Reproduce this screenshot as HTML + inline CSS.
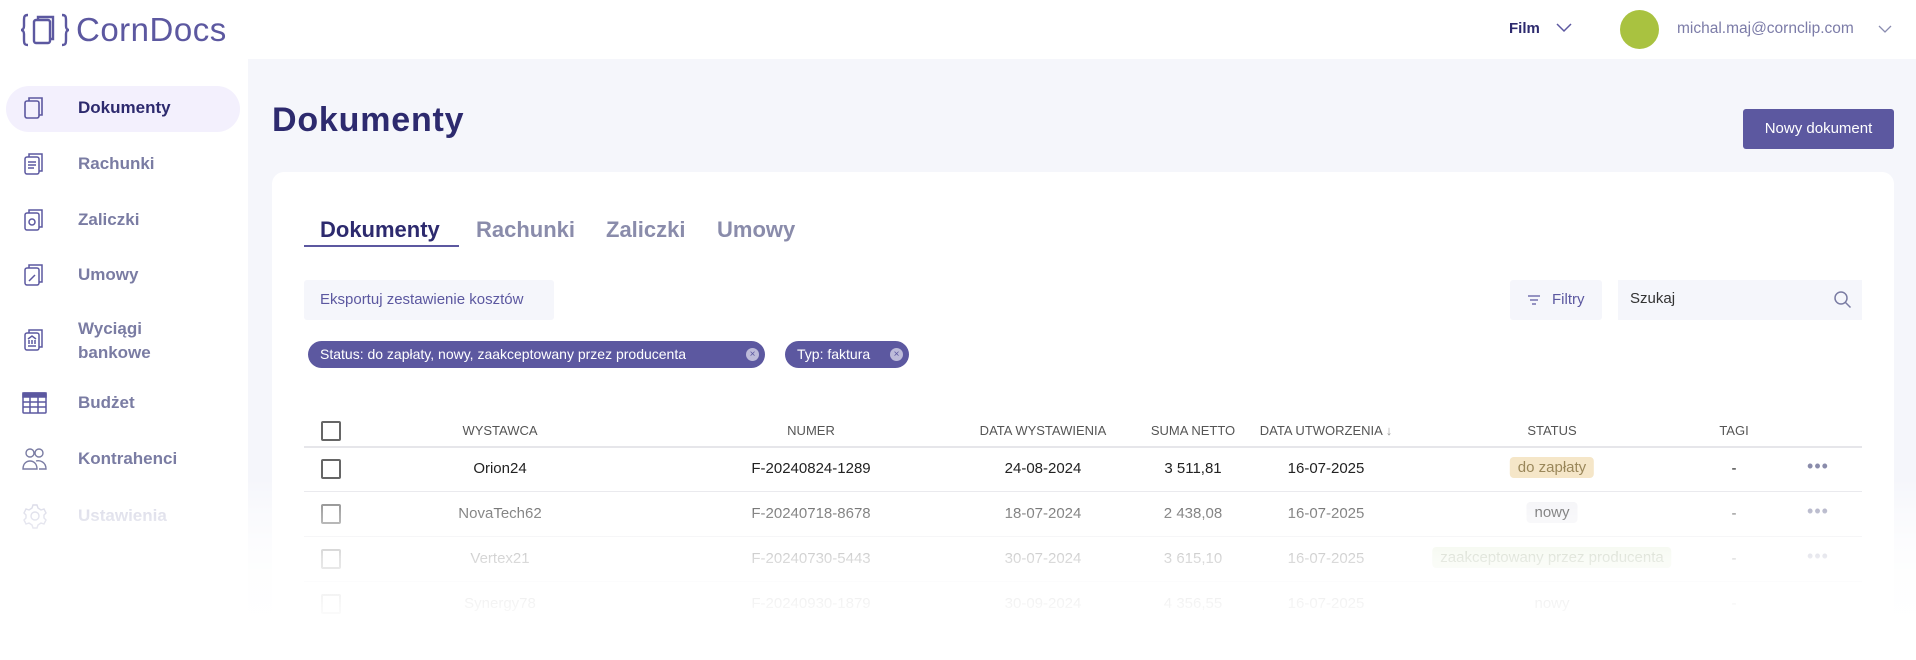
<!DOCTYPE html>
<html><head><meta charset="utf-8"><style>
*{box-sizing:border-box;margin:0;padding:0}
body{width:1916px;height:660px;overflow:hidden;background:#fff;font-family:"Liberation Sans",sans-serif;position:relative;color:#222}
.abs{position:absolute}
.main{left:248px;top:59px;width:1668px;height:601px;background:#f5f6fb}
.nav{left:6px;width:234px;height:46px;border-radius:23px}
.nl{position:absolute;left:78px;font-size:17px;font-weight:bold;color:#7a7ca3}
.ic{position:absolute;left:22px}
.card{left:272px;top:172px;width:1622px;height:488px;background:#fff;border-radius:12px}
.tab{top:217px;font-size:22px;font-weight:bold;color:#8a8cab}
.th{top:423px;font-size:13px;color:#555;text-align:center;transform:translateX(-50%);white-space:nowrap}
.td{font-size:15px;text-align:center;transform:translateX(-50%);white-space:nowrap}
.cb{left:321px;width:20px;height:20px;border:2px solid #666;border-radius:2px}
.line{left:304px;width:1558px;height:1px;background:#e6e6ea}
.chip{top:341px;height:27px;border-radius:14px;background:#5c58a0;color:#fff;font-size:14px;line-height:27px;padding-left:12px}
.x{position:absolute;right:6px;top:7px;width:13px;height:13px;border-radius:50%;background:#bdbbd9;color:#5c58a0;font-size:10px;line-height:13px;text-align:center}
</style></head><body>
<!-- header -->
<div class="abs" style="left:20px;top:10px;height:40px;display:flex;align-items:center;color:#5c58a0">
<svg width="50" height="36" viewBox="0 0 50 36" fill="none" stroke="#5c58a0" stroke-width="2.4"><path d="M8 3c-4 0-4 2-4 6v5c0 2-1 4-3 4c2 0 3 2 3 4v5c0 4 0 6 4 6"/><path d="M42 3c4 0 4 2 4 6v5c0 2 1 4 3 4c-2 0-3 2-3 4v5c0 4 0 6-4 6"/><rect x="14" y="8" width="16" height="23" rx="2"/><path d="M18 8V5h15v22h-3"/></svg>
<span style="font-size:33px;margin-left:6px;letter-spacing:0.5px">CornDocs</span></div>
<div class="abs" style="left:1509px;top:20px;font-size:15px;font-weight:bold;color:#2d2a6e">Film</div>
<svg class="abs" style="left:1556px;top:23px" width="16" height="10"><path d="M1 1l7 7 7-7" fill="none" stroke="#5c58a0" stroke-width="1.5"/></svg>
<div class="abs" style="left:1620px;top:10px;width:39px;height:39px;border-radius:50%;background:#a9c240"></div>
<div class="abs" style="left:1677px;top:20px;font-size:15.5px;color:#7c7ca8">michal.maj@cornclip.com</div>
<svg class="abs" style="left:1878px;top:25px" width="14" height="9"><path d="M1 1l6 6 6-6" fill="none" stroke="#8a8cb0" stroke-width="1.3"/></svg>

<!-- sidebar -->
<div class="abs nav" style="top:86px;background:#f3f0fd"></div>
<div class="abs" style="left:0;top:0;width:248px;height:600px">
<svg class="ic" style="top:96px" width="24" height="24" fill="none" stroke="#5c58a0" stroke-width="1.6"><rect x="3" y="5" width="14" height="17" rx="2"/><path d="M7 5V2h13v17h-3"/></svg>
<div class="nl" style="top:98px;color:#2d2a6e">Dokumenty</div>
<svg class="ic" style="top:152px" width="24" height="24" fill="none" stroke="#5c58a0" stroke-width="1.5"><rect x="3" y="5" width="14" height="17" rx="2"/><path d="M7 5V2h13v17h-3M6 10h8M6 13h8M6 16h6"/></svg>
<div class="nl" style="top:154px">Rachunki</div>
<svg class="ic" style="top:208px" width="24" height="24" fill="none" stroke="#5c58a0" stroke-width="1.5"><rect x="3" y="5" width="14" height="17" rx="2"/><path d="M7 5V2h13v17h-3"/><circle cx="10" cy="14" r="3"/></svg>
<div class="nl" style="top:210px">Zaliczki</div>
<svg class="ic" style="top:263px" width="24" height="24" fill="none" stroke="#5c58a0" stroke-width="1.5"><rect x="3" y="5" width="14" height="17" rx="2"/><path d="M7 5V2h13v17h-3M7 18l6-6"/></svg>
<div class="nl" style="top:265px">Umowy</div>
<svg class="ic" style="top:328px" width="24" height="24" fill="none" stroke="#5c58a0" stroke-width="1.5"><rect x="3" y="5" width="14" height="17" rx="2"/><path d="M7 5V2h13v17h-3M6 18h8M7 16v-4M10 16v-4M13 16v-4M6 11l4-3 4 3"/></svg>
<div class="nl" style="top:317px;line-height:24px">Wyciągi<br>bankowe</div>
<svg class="ic" style="top:391px" width="26" height="24" fill="none" stroke="#5c58a0" stroke-width="1.5"><rect x="1" y="2" width="23" height="20" rx="1"/><rect x="1" y="2" width="23" height="4" fill="#5c58a0"/><path d="M1 11h23M1 16h23M8 6v16M16 6v16"/></svg>
<div class="nl" style="top:393px">Budżet</div>
<svg class="ic" style="top:447px" width="26" height="24" fill="none" stroke="#7a7ca3" stroke-width="1.4"><circle cx="8" cy="6" r="4"/><circle cx="17" cy="6" r="4"/><path d="M1 22c0-6 4-8 7-8s7 2 7 8zM14 14c4-1 10 1 10 8h-7"/></svg>
<div class="nl" style="top:449px">Kontrahenci</div>
<svg class="ic" style="top:503px" width="26" height="26" fill="none" stroke="#c9cadd" stroke-width="1.4"><circle cx="13" cy="13" r="4"/><path d="M11 2h4l1 3 3 2 3-1 2 4-2 2v3l2 2-2 4-3-1-3 2-1 3h-4l-1-3-3-2-3 1-2-4 2-2v-3L2 10l2-4 3 1 3-2z"/></svg>
<div class="nl" style="top:506px;color:#c9cadd">Ustawienia</div>
</div>

<!-- main -->
<div class="abs main"></div>
<div class="abs" style="left:272px;top:101px;font-size:34px;font-weight:bold;color:#2d2a6e;letter-spacing:0.8px">Dokumenty</div>
<div class="abs" style="left:1743px;top:109px;width:151px;height:40px;border-radius:3px;background:#5c58a0;color:#fff;font-size:15px;line-height:40px;text-align:center">Nowy dokument</div>
<div class="abs card"></div>
<div class="abs tab" style="left:320px;color:#2d2a6e">Dokumenty</div>
<div class="abs" style="left:304px;top:245px;width:155px;height:2px;background:#5c58a0"></div>
<div class="abs tab" style="left:476px">Rachunki</div>
<div class="abs tab" style="left:606px">Zaliczki</div>
<div class="abs tab" style="left:717px">Umowy</div>

<div class="abs" style="left:304px;top:280px;width:250px;height:40px;background:#f5f6fb;border-radius:3px;color:#5c58a0;font-size:15px;line-height:40px;padding-left:16px">Eksportuj zestawienie kosztów</div>
<div class="abs" style="left:1510px;top:280px;width:92px;height:40px;background:#f5f6fb;border-radius:3px;color:#5c58a0;font-size:15px;line-height:40px;padding-left:42px">Filtry</div>
<svg class="abs" style="left:1527px;top:294px" width="14" height="12" stroke="#5c58a0" stroke-width="1.3"><path d="M1 2h12M3 6h8M5 10h4"/></svg>
<div class="abs" style="left:1618px;top:280px;width:244px;height:40px;background:#f5f6fb;color:#333;font-size:15px;line-height:38px;padding-left:12px">Szukaj</div>
<svg class="abs" style="left:1833px;top:290px" width="20" height="20" fill="none" stroke="#7a7ca3" stroke-width="1.5"><circle cx="8" cy="8" r="6"/><path d="M12.5 12.5l5 5"/></svg>

<div class="abs chip" style="left:308px;width:457px">Status: do zapłaty, nowy, zaakceptowany przez producenta<span class="x">×</span></div>
<div class="abs chip" style="left:785px;width:124px">Typ: faktura<span class="x">×</span></div>

<!-- table -->
<div class="abs cb" style="top:421px"></div>
<div class="abs th" style="left:500px">WYSTAWCA</div>
<div class="abs th" style="left:811px">NUMER</div>
<div class="abs th" style="left:1043px">DATA WYSTAWIENIA</div>
<div class="abs th" style="left:1193px">SUMA NETTO</div>
<div class="abs th" style="left:1326px">DATA UTWORZENIA <span style="color:#999">↓</span></div>
<div class="abs th" style="left:1552px">STATUS</div>
<div class="abs th" style="left:1734px">TAGI</div>
<div class="abs line" style="top:446px;height:2px"></div>

<div class="abs cb" style="top:459px"></div>
<div class="abs td" style="left:500px;top:460px">Orion24</div>
<div class="abs td" style="left:811px;top:460px">F-20240824-1289</div>
<div class="abs td" style="left:1043px;top:460px">24-08-2024</div>
<div class="abs td" style="left:1193px;top:460px">3 511,81</div>
<div class="abs td" style="left:1326px;top:460px">16-07-2025</div>
<div class="abs td" style="left:1552px;top:457px;background:#f5e6c8;color:#9a875a;padding:2px 8px;border-radius:4px">do zapłaty</div>
<div class="abs td" style="left:1734px;top:460px">-</div>
<div class="abs td" style="left:1818px;top:456px;color:#8a8cab;font-size:18px;letter-spacing:1px">•••</div>
<div class="abs line" style="top:491px"></div>

<div class="abs cb" style="top:504px"></div>
<div class="abs td" style="left:500px;top:505px">NovaTech62</div>
<div class="abs td" style="left:811px;top:505px">F-20240718-8678</div>
<div class="abs td" style="left:1043px;top:505px">18-07-2024</div>
<div class="abs td" style="left:1193px;top:505px">2 438,08</div>
<div class="abs td" style="left:1326px;top:505px">16-07-2025</div>
<div class="abs td" style="left:1552px;top:502px;background:#f1f1f5;padding:2px 8px;border-radius:4px">nowy</div>
<div class="abs td" style="left:1734px;top:505px">-</div>
<div class="abs td" style="left:1818px;top:501px;color:#8a8cab;font-size:18px;letter-spacing:1px">•••</div>
<div class="abs line" style="top:536px"></div>

<div class="abs cb" style="top:549px"></div>
<div class="abs td" style="left:500px;top:550px">Vertex21</div>
<div class="abs td" style="left:811px;top:550px">F-20240730-5443</div>
<div class="abs td" style="left:1043px;top:550px">30-07-2024</div>
<div class="abs td" style="left:1193px;top:550px">3 615,10</div>
<div class="abs td" style="left:1326px;top:550px">16-07-2025</div>
<div class="abs td" style="left:1552px;top:547px;background:#dfeccf;color:#6a8050;padding:2px 8px;border-radius:4px">zaakceptowany przez producenta</div>
<div class="abs td" style="left:1734px;top:550px">-</div>
<div class="abs td" style="left:1818px;top:546px;color:#8a8cab;font-size:18px;letter-spacing:1px">•••</div>
<div class="abs line" style="top:581px"></div>

<div class="abs cb" style="top:594px"></div>
<div class="abs td" style="left:500px;top:595px">Synergy78</div>
<div class="abs td" style="left:811px;top:595px">F-20240930-1879</div>
<div class="abs td" style="left:1043px;top:595px">30-09-2024</div>
<div class="abs td" style="left:1193px;top:595px">4 356,55</div>
<div class="abs td" style="left:1326px;top:595px">16-07-2025</div>
<div class="abs td" style="left:1552px;top:595px">nowy</div>
<div class="abs td" style="left:1734px;top:595px">-</div>

<!-- fade -->
<div class="abs" style="left:0;top:478px;width:1916px;height:182px;background:linear-gradient(to bottom,rgba(255,255,255,0) 0px,rgba(255,255,255,0.45) 35px,rgba(255,255,255,0.82) 80px,rgba(255,255,255,0.95) 125px,#fff 150px)"></div>
</body></html>
